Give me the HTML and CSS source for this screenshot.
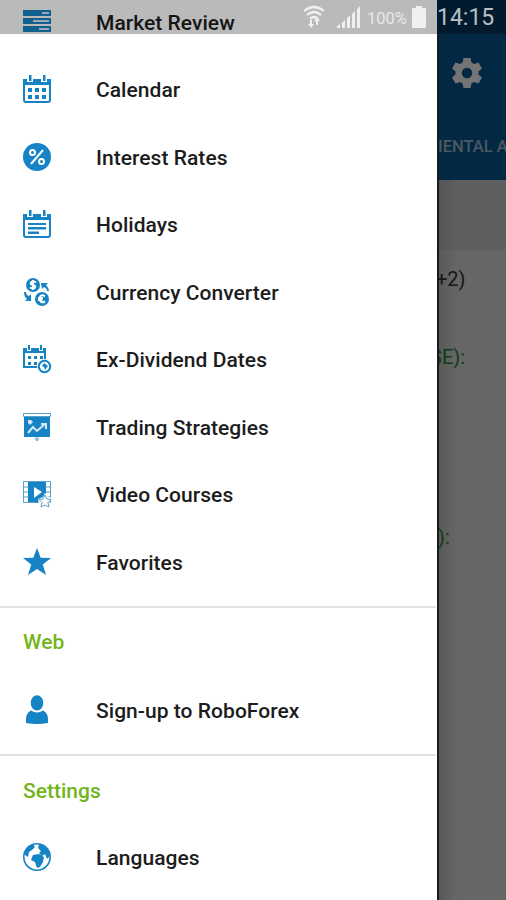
FILE: index.html
```html
<!DOCTYPE html>
<html lang="en">
<head>
<meta charset="utf-8">
<title>Navigation drawer</title>
<link rel="stylesheet" href="styles.css">
</head>
<body>
<div class="screen">
  <nav class="drawer">
    <a class="item"><svg class="icon" viewBox="0 0 28 28"><path d="M0 2h28v6H0zM0 10h28v6H0zM0 18h28v6H0z"/><path class="light" d="M19 4h7v2h-7zM10 12h16v2H10zM16 20h10v2H16z"/></svg><span>Market Review</span></a>
    <a class="item"><svg class="icon" viewBox="0 0 28 28"><path class="line" d="M1 5h26v20q0 2-2 2H3q-2 0-2-2z"/><path d="M1 4h26v6H1z"/><path class="cut" d="M4 1h6v6H4zM18 1h6v6h-6z"/><path d="M6 0h2.500v6H6zM20 0h2.500v6H20zM5 13h4v4H5zM12 13h4v4h-4zM19 13h4v4h-4zM5 20h4v4H5zM12 20h4v4h-4zM19 20h4v4h-4z"/></svg><span>Calendar</span></a>
    <a class="item"><svg class="icon" viewBox="0 0 28 28"><circle cx="14" cy="14" r="14"/><g class="line white"><circle cx="9.500" cy="9.500" r="2.500"/><circle cx="18.500" cy="18.500" r="2.500"/><path d="M20 7L8 21"/></g></svg><span>Interest Rates</span></a>
    <a class="item"><svg class="icon" viewBox="0 0 28 28"><path class="line" d="M1 5h26v20q0 2-2 2H3q-2 0-2-2z"/><path d="M1 4h26v6H1z"/><path class="cut" d="M4 1h6v6H4zM18 1h6v6h-6z"/><path d="M6 0h2.500v6H6zM20 0h2.500v6H20zM5 13h18v2H5zM5 17h18v2.500H5zM5 21.500h11V24H5z"/></svg><span>Holidays</span></a>
    <a class="item"><svg class="icon" viewBox="0 0 28 28"><circle cx="10" cy="7" r="7"/><circle cx="19" cy="21" r="7"/><path class="line white" d="M13 4.500Q10 2.500 8 4.500Q7 6.500 10 7T12 9.500Q10 11.500 7 9.500M10 2v10M22 18.500Q18 15.500 16.500 20Q17 26 22 23.500M15 20h5M15 22h4.500"/><path d="M18 5l7 0-2 2q3 3 3 6h-2q0-3-3-4l-2 2zM1 14l2 0q0 3 3 4l2-2v7H2l2-2q-3-2-3-7z"/></svg><span>Currency Converter</span></a>
    <a class="item"><svg class="icon" viewBox="0 0 28 28"><path class="line" d="M1 4h21v18H1z"/><path d="M0 3h23v5H0z"/><path class="cut" d="M4 1h4v5H4zM16 1h4v5h-4z"/><path d="M5 0h2v5H5zM17 0h2v5h-2zM5 11h3v3H5zM11 11h3v3h-3zM17 11h3v3h-3zM5 17h3v3H5zM11 17h3v3h-3z"/><circle class="cut" cx="21.500" cy="21.500" r="7.500"/><circle class="line" cx="21.500" cy="21.500" r="5.700"/><path d="M21 18l4 3-3 4-1-3-2-1z"/></svg><span>Ex-Dividend Dates</span></a>
    <a class="item"><svg class="icon" viewBox="0 0 28 28"><path class="thin" d="M.5 .5h27v3H.5zM14 24v3M12 25l2 3 2-3"/><path d="M1 4h26v20H1z"/><path class="line pale" d="M5 20l5-6 4 4 8-7M18 11h5v5"/><path class="light" d="M5 7l3 0 2 2-3 3-2-2z"/></svg><span>Trading Strategies</span></a>
    <a class="item"><svg class="icon" viewBox="0 0 28 28"><path d="M5 1h18v22H5z"/><path class="thin" d="M.5 1.500h27v21H.5zM0 7h5M0 12h5M0 17h5M23 7h5M23 12h5M23 17h5"/><path class="cut" d="M11 7l8 5-8 6zM22 13l3 4 4 1-3 5v5H17l-2-9 5-2z"/><path class="thin" d="M22 15l2 4 4 .5-3 3 1 4.500-4-2-4 2 1-4.500-3-3 4-.5z"/></svg><span>Video Courses</span></a>
    <a class="item"><svg class="icon" viewBox="0 0 28 28"><path d="M14 0l3.700 9.700 10.300.3-8.200 6.500L23 27l-9-6-9 6 3.200-10.500L0 10l10.300-.3z"/></svg><span>Favorites</span></a>
    <div class="rule rule-main"></div>
    <h2 class="heading web">Web</h2>
    <a class="item"><svg class="icon" viewBox="0 0 28 28"><ellipse cx="14" cy="6.800" rx="6.300" ry="7.600"/><path d="M3 27q-1-10 5-12.500 6 4 12 0 6 2.500 5 12.500-11 2-22 0z"/></svg><span>Sign-up to RoboForex</span></a>
    <div class="rule"></div>
    <h2 class="heading">Settings</h2>
    <a class="item"><svg class="icon" viewBox="0 0 28 28"><circle class="globe" cx="14" cy="14" r="13.200"/><path d="M2 9Q5 3 10 1l2 3-3 3-3 2-1 5-3-2zM16 1q10 2 11 12l-3 3-2-5-3 2-3-3 2-2-3-3zM10 12l6-1 5 3-1 5-3 5-3 1-2-6-4-2z"/></svg><span>Languages</span></a>
  </nav>
  <main class="behind">
    <header class="toolbar">
      <svg class="gear" viewBox="0 0 30 30"><path fill-rule="evenodd" d="M11.500 0h7l1 4.500 2.500 1.500 4.500-1.500 3.500 6-3.500 3v3l3.500 3-3.500 6-4.500-1.500-2.500 1.500-1 4.500h-7l-1-4.500L8 24l-4.500 1.500-3.500-6 3.500-3v-3l-3.500-3 3.500-6L8 6l2.500-1.500zM15 9.800a5.200 5.200 0 1 0 0 10.400 5.200 5.200 0 1 0 0-10.400z"/></svg>
      <div class="tab">IENTAL A</div>
    </header>
    <div class="subbar"></div>
    <div class="feed"><p class="first">+2)</p><p class="green second"><span class="clip">SE):</span></p><p class="green third">):</p></div>
  </main>
  <div class="status">
    <svg class="wifi" viewBox="0 0 22 24"><path class="arc" d="M1 6q10-8 20 0M4 10q7-6 14 0M7 14q4-4 8 0"/><path d="M7 15h2v4h2l-3 4-3-4h2zM14 12l3 4h-2v4h-2v-4h-2z"/></svg>
    <svg class="signal" viewBox="0 0 24 22"><path d="M0 22v-2l3-2v4zM5 22v-5l3-3v8zM10 22V12l3-3v13zM15 22V8l3-3v17zM20 22V3l3-3v22z"/></svg>
    <span class="percent">100%</span>
    <svg class="battery" viewBox="0 0 14 22"><path d="M4 0h6v2h3q1 0 1 1v18q0 1-1 1H1q-1 0-1-1V3q0-1 1-1h3z"/></svg>
    <span class="clock">14:15</span>
  </div>
</div>
</body>
</html>
```
FILE: styles.css
```css
* { box-sizing: border-box; }
body { margin: 0; font-family: Roboto, sans-serif; }
.screen { position: relative; display: grid; grid-template-columns: 437px 69px; height: 900px; overflow: hidden; background: #666; }
.drawer { height: 900px; overflow: hidden; background: #fff; padding-right: 1px; }
.item { display: flex; align-items: center; height: 67.5px; padding-left: 23px; font-size: 21px; font-weight: 500; letter-spacing: .04px; color: #1c1c1c; white-space: nowrap; }
.item span { padding-top: 2px; }
.item:first-child { margin-top: -12px; }
.icon { width: 28px; height: 28px; margin-right: 45px; flex: none; fill: #1683c5; overflow: visible; }
.line { fill: none; stroke: #1683c5; stroke-width: 2; }
.thin { fill: none; stroke: #5b9fcb; stroke-width: 1; }
.globe { fill: #fff; stroke: #1683c5; stroke-width: 1.6; }
.cut { fill: #fff; }
.light { fill: #d5e7f4; }
.white { stroke: #fff; }
.pale { stroke: #d5e7f4; }
.rule { height: 2px; background: #e2e2e2; margin-top: 10.5px; }
.rule-main { margin-top: 10.5px; }
.heading { margin: 0; height: 67px; padding-left: 23px; font-size: 21px; font-weight: 500; line-height: 70px; color: #72b51b; }
.web { height: 68px; line-height: 68px; }
.behind { border-left: 2px solid #161b1e; height: 900px; background: linear-gradient(90deg, #595959, #666 18px); overflow: hidden; }
.toolbar { height: 180px; padding-top: 58px; background: #032843; }
.gear { display: block; width: 30px; height: 30px; margin-left: 13px; fill: #747474; }
.tab { margin-top: 49px; margin-left: -1px; font-size: 16.5px; font-weight: 500; line-height: 20px; color: #4d5962; white-space: nowrap; }
.subbar { height: 70px; background: linear-gradient(90deg, #525456, #5d5f61 18px); }
.feed { color: #161616; font-size: 20px; }
.feed p { margin: 0; line-height: 24px; white-space: nowrap; }
.feed .first { margin-top: 17px; margin-left: -3px; }
.feed .green { color: #103d16; }
.feed .second { margin-top: 54px; }
.clip { margin-left: -9px; }
.feed .third { margin-top: 156px; margin-left: -1px; }
.status { position: absolute; inset: 0 0 auto; height: 34px; display: flex; align-items: center; padding-left: 303px; background: linear-gradient(90deg, rgba(0,0,0,.27) 437px, #021a2e 437px); fill: #f0f0f0; color: #e8e8e8; }
.wifi { width: 22px; height: 24px; margin-right: 12px; }
.arc { fill: none; stroke: #f0f0f0; stroke-width: 2.2; }
.signal { width: 24px; height: 22px; margin-right: 6px; }
.percent { width: 45px; font-size: 16.5px; padding-top: 2px; }
.battery { width: 14px; height: 22px; }
.clock { margin-left: 11px; font-size: 23px; line-height: 34px; color: #b9c0c5; padding-top: 2px; }
```
